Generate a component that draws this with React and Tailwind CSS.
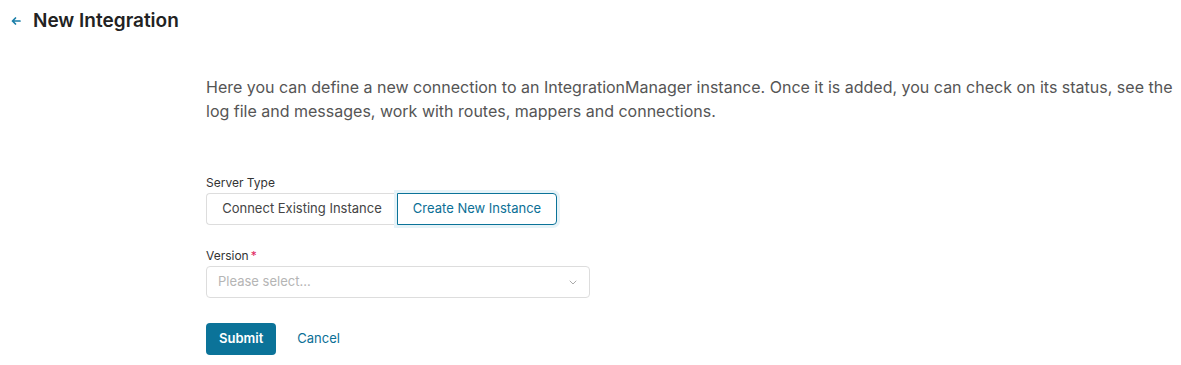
import React, { useState } from 'react'

const ArrowLeft = () => (
  <svg width="10" height="10" viewBox="0 0 10 10" fill="none" stroke="currentColor" strokeWidth="1.7" strokeLinecap="round" strokeLinejoin="round">
    <path d="M9 5H1.5M4.5 2L1.5 5l3 3" />
  </svg>
)

const Chevron = () => (
  <svg width="8" height="5" viewBox="0 0 8 5" fill="none" stroke="currentColor" strokeWidth="1" strokeLinecap="round" strokeLinejoin="round">
    <path d="M1 1l3 3 3-3" />
  </svg>
)

export default function App() {
  const [serverType, setServerType] = useState('new')

  return (
    <div className="min-h-screen bg-white font-['Inter',sans-serif] text-[#333]">
      {/* Header */}
      <div className="flex items-center h-[40px] pt-[2px] pl-[11px]">
        <button className="text-[#1a7ea8] w-[10px] flex items-center">
          <ArrowLeft />
        </button>
        <h1 className="ml-[12px] text-[19px] font-semibold text-[#222]">New Integration</h1>
      </div>

      <div className="pl-[206px] pr-[8px] pt-[35px]">
        <p className="text-[16px] leading-[24px] text-[#555]">
          Here you can define a new connection to an IntegrationManager instance. Once it is added, you can check on its status, see the log file and messages, work with routes, mappers and connections.
        </p>

        <div className="mt-[52px]">
          <label className="block text-[12px] leading-[16px] text-[#333]">Server Type</label>
          <div className="mt-[2px] flex">
            <button
              onClick={() => setServerType('existing')}
              className={`h-[32px] w-[191px] text-[13px] text-[#444] rounded-l-[4px] border ${serverType === 'existing' ? 'border-[#0b7399] ring-[3px] ring-[#e6f3f8]' : 'border-[#ddd] border-r-0'}`}
            >
              Connect Existing Instance
            </button>
            <button
              onClick={() => setServerType('new')}
              className={`h-[32px] w-[160px] text-[13px] text-[#0b6f96] rounded-r-[4px] border ${serverType === 'new' ? 'border-[#0b7399] ring-[3px] ring-[#e6f3f8]' : 'border-[#ddd]'}`}
            >
              Create New Instance
            </button>
          </div>
        </div>

        <div className="mt-[23px]">
          <label className="block text-[12px] leading-[16px] text-[#333]">
            Version<span className="text-[#e0245e] ml-[2px]">*</span>
          </label>
          <div className="mt-[2px] w-[384px] h-[32px] border border-[#ddd] rounded-[4px] flex items-center justify-between pl-[11px] pr-[12px]">
            <span className="text-[13px] text-[#b5b5b5]">Please select...</span>
            <span className="text-[#aaa]"><Chevron /></span>
          </div>
        </div>

        <div className="mt-[25px] flex items-center">
          <button className="h-[32px] px-[13px] bg-[#0b7399] text-white text-[13px] font-semibold rounded-[4px]">Submit</button>
          <button className="ml-[21px] text-[13px] text-[#0b6f96]">Cancel</button>
        </div>
      </div>
    </div>
  )
}
